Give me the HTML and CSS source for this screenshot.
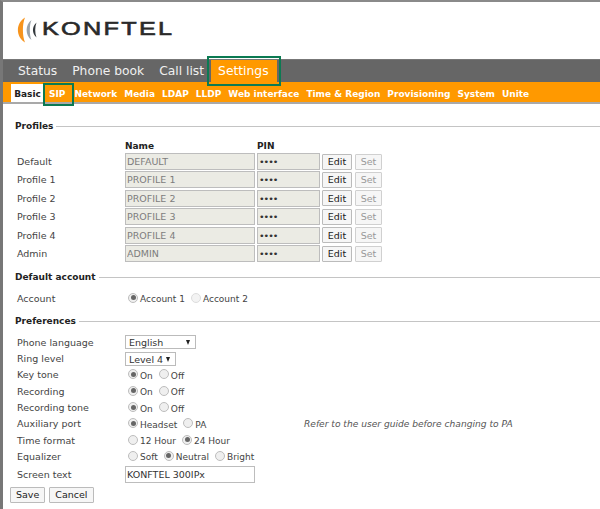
FILE: index.html
```html
<!DOCTYPE html>
<html lang="en">
<head>
<meta charset="utf-8">
<title>Konftel 300IPx - Settings</title>
<link rel="stylesheet" href="styles.css">
</head>
<body>
<div class="frame">
  <header class="brand">
    <svg class="mark" width="24" height="26" viewBox="0 0 24 26" aria-hidden="true">
      <path d="M8 0.500C-1.500 6 -1.500 20 8 25.500C5.200 19 5.200 7 8 0.500Z" fill="#f7941d"/>
      <path d="M14.500 3C8 8 8 18 14.500 23C12.300 18 12.300 8 14.500 3Z" fill="#9aa3ab"/>
      <path d="M19.500 5.500C14.800 10 14.800 16 19.500 20.500C17.800 16 17.800 10 19.500 5.500Z" fill="#33383c"/>
    </svg>
    <span class="wordmark">KONFTEL</span>
  </header>
  <nav class="mainnav">
    <a class="main-item">Status</a>
    <a class="main-item">Phone book</a>
    <a class="main-item">Call list</a>
    <a class="main-item active">Settings</a>
  </nav>
  <nav class="subnav">
    <a class="sub-item current">Basic</a>
    <a class="sub-item marked">SIP</a>
    <a class="sub-item">Network</a>
    <a class="sub-item">Media</a>
    <a class="sub-item">LDAP</a>
    <a class="sub-item">LLDP</a>
    <a class="sub-item">Web interface</a>
    <a class="sub-item">Time &amp; Region</a>
    <a class="sub-item">Provisioning</a>
    <a class="sub-item">System</a>
    <a class="sub-item">Unite</a>
  </nav>
  <main class="content">
    <h2 class="section first">Profiles</h2>
    <div class="profiles">
      <div class="ph"></div><div class="ph">Name</div><div class="ph">PIN</div><div></div><div></div>
      <div class="plabel">Default</div><input class="field name" disabled value="DEFAULT"><input class="field pin" type="password" disabled value="0000"><button class="btn edit">Edit</button><button class="btn set" disabled>Set</button>
      <div class="plabel">Profile 1</div><input class="field name" disabled value="PROFILE 1"><input class="field pin" type="password" disabled value="0000"><button class="btn edit">Edit</button><button class="btn set" disabled>Set</button>
      <div class="plabel">Profile 2</div><input class="field name" disabled value="PROFILE 2"><input class="field pin" type="password" disabled value="0000"><button class="btn edit">Edit</button><button class="btn set" disabled>Set</button>
      <div class="plabel">Profile 3</div><input class="field name" disabled value="PROFILE 3"><input class="field pin" type="password" disabled value="0000"><button class="btn edit">Edit</button><button class="btn set" disabled>Set</button>
      <div class="plabel">Profile 4</div><input class="field name" disabled value="PROFILE 4"><input class="field pin" type="password" disabled value="0000"><button class="btn edit">Edit</button><button class="btn set" disabled>Set</button>
      <div class="plabel">Admin</div><input class="field name" disabled value="ADMIN"><input class="field pin" type="password" disabled value="0000"><button class="btn edit">Edit</button><button class="btn set" disabled>Set</button>
    </div>

    <h2 class="section second">Default account</h2>
    <div class="row account">
      <div class="rlabel">Account</div>
      <div class="opts">
        <span class="radio on"></span><span class="opt">Account 1</span>
        <span class="radio off"></span><span class="opt">Account 2</span>
      </div>
    </div>

    <h2 class="section third">Preferences</h2>
    <div class="prefs">
      <div class="row r-lang"><div class="rlabel">Phone language</div><div class="select s-lang">English<span class="arrow"></span></div></div>
      <div class="row r-ring"><div class="rlabel">Ring level</div><div class="select s-ring">Level 4<span class="arrow"></span></div></div>
      <div class="row"><div class="rlabel">Key tone</div><div class="opts"><span class="radio on"></span><span class="opt">On</span><span class="radio"></span><span class="opt">Off</span></div></div>
      <div class="row"><div class="rlabel">Recording</div><div class="opts"><span class="radio on"></span><span class="opt">On</span><span class="radio"></span><span class="opt">Off</span></div></div>
      <div class="row"><div class="rlabel">Recording tone</div><div class="opts"><span class="radio on"></span><span class="opt">On</span><span class="radio"></span><span class="opt">Off</span></div></div>
      <div class="row"><div class="rlabel">Auxiliary port</div><div class="opts"><span class="radio on"></span><span class="opt">Headset</span><span class="radio"></span><span class="opt">PA</span></div><div class="note">Refer to the user guide before changing to PA</div></div>
      <div class="row"><div class="rlabel">Time format</div><div class="opts"><span class="radio"></span><span class="opt">12 Hour</span><span class="radio on"></span><span class="opt">24 Hour</span></div></div>
      <div class="row"><div class="rlabel">Equalizer</div><div class="opts"><span class="radio"></span><span class="opt">Soft</span><span class="radio on"></span><span class="opt">Neutral</span><span class="radio"></span><span class="opt">Bright</span></div></div>
      <div class="row r-screen"><div class="rlabel">Screen text</div><input class="field screen" value="KONFTEL 300IPx"></div>
    </div>
    <div class="actions">
      <button class="btn action">Save</button>
      <button class="btn action">Cancel</button>
    </div>
  </main>
</div>
</body>
</html>
```
FILE: styles.css
```css
* { box-sizing: border-box; }
html, body { margin: 0; padding: 0; background: #fff; }
body { width: 600px; height: 509px; overflow: hidden; font-family: "DejaVu Sans", Verdana, sans-serif; font-size: 9.5px; color: #333; }
.frame { height: 509px; border-top: 2px solid #8a8a8a; border-left: 3px solid #777; }

.brand { height: 57px; display: flex; align-items: center; padding: 0 0 2px 14px; }
.mark { flex: none; margin-top: 0; }
.wordmark { margin-left: 1px; margin-top: -1px; font-family: "Liberation Sans", Arial, sans-serif; font-size: 19px; line-height: 20px; letter-spacing: 1.7px; color: #2a2a2a; -webkit-text-stroke: 0.6px #2a2a2a; transform: scaleX(1.33); transform-origin: left center; }

.mainnav { height: 23px; background: #666; border-top: 1px solid #777; display: flex; padding-left: 15px; gap: 15px; }
.main-item { font-size: 12.3px; line-height: 22px; color: #f0f0f0; }
.main-item.active { background: #f90; color: #fff; margin-left: -8px; padding: 0 8px 0 7px; outline: 2px solid #0b7a52; outline-offset: 2px; }

.subnav { height: 22px; background: #f90; border-bottom: 2px solid #a9a9a9; display: flex; align-items: flex-end; padding-left: 8px; gap: 7px; }
.sub-item { font-size: 9px; font-weight: bold; color: #fff; line-height: 19px; height: 17px; white-space: nowrap; }
.sub-item.current { background: #fff; color: #222; width: 32px; height: 18px; line-height: 20px; text-align: center; padding-left: 1px; margin-right: -1px; }
.sub-item.marked { position: relative; margin-right: 2px; }
.sub-item.marked::after { content: ""; position: absolute; left: -6px; right: -9px; top: -2px; bottom: -4px; border: 2px solid #0b7a52; }

.content { padding: 0 0 0 12px; }
.section { display: flex; align-items: center; gap: 3px; margin: 0; height: 12px; font-size: 9px; font-weight: bold; color: #222; }
.section::after { content: ""; flex: 1; height: 1px; background: #c4c4c4; }
.section.first { margin-top: 16px; }
.section.second { margin-top: 8.5px; }
.section.third { margin-top: 9px; }

.profiles { display: grid; grid-template-columns: 108px 132px 65px 33px 27px; grid-auto-rows: 18.4px; align-items: center; margin: 2px 0 0 0; padding-left: 2px; width: 375px; }
.ph { font-weight: bold; font-size: 9px; color: #222; align-self: end; line-height: 12px; }
.plabel, .rlabel { color: #444; }
.rlabel { width: 108px; flex: none; }

.field { font-family: "DejaVu Sans", Verdana, sans-serif; font-size: 9.5px; height: 17px; padding: 0 1px; border: 1px solid #bdbdbd; border-radius: 0; margin: 0; outline: none; }
.field.name { width: 130px; background: #ebebe4; color: #7d7d7d; }
.field.pin { width: 63px; background: #ebebe4; color: #333; letter-spacing: -1px; }
.field.screen { width: 130px; background: #fff; color: #333; }

.btn { font-family: "DejaVu Sans", Verdana, sans-serif; font-size: 9.5px; height: 16px; padding: 0; margin: 0; background: #f6f6f6; border: 1px solid #bbb; border-radius: 1px; color: #222; }
.btn.edit { width: 30px; }
.btn.set { width: 27px; color: #999; border-color: #d0d0d0; background: #f6f6f6; }

.row { display: flex; align-items: center; height: 16.3px; padding-left: 2px; }
.account { margin-top: 7px; height: 16px; }
.opts { display: flex; align-items: center; padding-left: 3px; margin-top: 2px; font-size: 9px; }
.radio { flex: none; position: relative; width: 10px; height: 10px; border-radius: 50%; background: #efefef; border: 1px solid #bdbdbd; margin-right: 2px; margin-top: -3px; }
.radio.off { background: #f3f3f3; border-color: #ddd; }
.radio.on::after { content: ""; position: absolute; left: 1.5px; top: 1.5px; width: 5px; height: 5px; border-radius: 50%; background: #666; }
.opt { color: #444; margin-right: 6px; }
.note { position: absolute; left: 304px; font-size: 9.1px; font-style: italic; color: #555; }

.prefs { margin-top: 7px; }
.select { position: relative; height: 14px; line-height: 13px; background: #fff; border: 1px solid #bbb; padding-left: 3px; color: #333; }
.s-lang { width: 71px; }
.s-ring { width: 51px; }
.arrow { position: absolute; right: 5px; top: 4px; width: 0; height: 0; border-left: 2.5px solid transparent; border-right: 2.5px solid transparent; border-top: 5px solid #222; }
.r-screen { height: 17px; margin-top: 1px; }

.actions { display: flex; gap: 4px; margin-top: 4px; margin-left: -5px; }
.btn.action { height: 16px; padding: 0 5px; }
```
